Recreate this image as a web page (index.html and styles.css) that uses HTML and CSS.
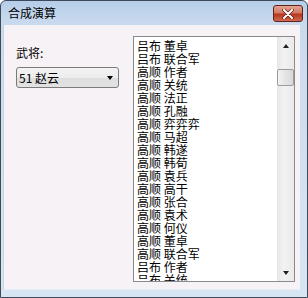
FILE: index.html
```html
<!DOCTYPE html>
<html lang="zh-CN">
<head>
  <meta charset="UTF-8">
  <title>合成演算</title>
  <link rel="stylesheet" href="styles.css">
</head>
<body>
  <div class="window">
    <div class="titlebar">
      <span class="title">合成演算</span>
      <span class="close">
        <svg width="12" height="10" viewBox="0 0 12 10">
          <path d="M2 1 L10 9 M10 1 L2 9" stroke="#5a1a12" stroke-width="3.4" stroke-linecap="round"/>
          <path d="M2 1 L10 9 M10 1 L2 9" stroke="#fff" stroke-width="2" stroke-linecap="round"/>
        </svg>
      </span>
    </div>
    <div class="client">
      <div class="side">
        <div class="label">武将:</div>
        <div class="combo">
          <span>51 赵云</span>
          <span class="combo-arrow"></span>
        </div>
      </div>
      <div class="listbox">
        <ul class="items">
          <li>吕布 董卓</li>
          <li>吕布 联合军</li>
          <li>高顺 作者</li>
          <li>高顺 关统</li>
          <li>高顺 法正</li>
          <li>高顺 孔融</li>
          <li>高顺 弈弈弈</li>
          <li>高顺 马超</li>
          <li>高顺 韩遂</li>
          <li>高顺 韩荀</li>
          <li>高顺 袁兵</li>
          <li>高顺 高干</li>
          <li>高顺 张合</li>
          <li>高顺 袁术</li>
          <li>高顺 何仪</li>
          <li>高顺 董卓</li>
          <li>高顺 联合军</li>
          <li>吕布 作者</li>
          <li>吕布 关统</li>
        </ul>
        <div class="scrollbar">
          <div class="sb-btn"><span class="arrow-up"></span></div>
          <div class="sb-track">
            <div class="sb-thumb"></div>
          </div>
          <div class="sb-btn"><span class="arrow-down"></span></div>
        </div>
      </div>
    </div>
  </div>
</body>
</html>
```

FILE: styles.css
```css
body {
  margin: 0;
  padding: 0;
  font-family: "Noto Sans CJK SC", "Liberation Sans", sans-serif;
  font-size: 12px;
  color: #000;
  background-color: #ffffff;
}

.window {
  width: 308px;
  height: 298px;
  box-sizing: border-box;
  border: 1px solid #3e4a5a;
  border-radius: 6px 6px 0 0;
  padding: 0 7px 7px 2px;
  background: linear-gradient(to bottom, #b6cee8 0px, #cbdbee 24px, #d8e5f3 100%);
  display: flex;
  flex-direction: column;
}

.titlebar {
  height: 24px;
  display: flex;
  align-items: flex-start;
  justify-content: space-between;
  padding-left: 5px;
}

.title {
  margin-top: 4px;
  line-height: 16px;
  font-size: 12px;
}

.close {
  width: 30px;
  height: 17px;
  box-sizing: border-box;
  margin-top: 4px;
  margin-right: -3px;
  border: 1px solid #5e231b;
  border-radius: 3px;
  background: linear-gradient(to bottom, #e4a394 0%, #d27a63 45%, #b8361f 55%, #cf6a4f 100%);
  display: flex;
  align-items: center;
  justify-content: center;
}

.client {
  flex: 1;
  display: flex;
  padding: 11px 0 0 12px;
  background-color: #f7f2f5;
  border-left: 1px solid #c9d3dc;
  border-bottom: 1px solid #e6edf3;
}

.side {
  width: 103px;
  margin-right: 14px;
}

.label {
  margin-top: 9px;
  line-height: 16px;
}

.combo {
  margin-top: 6px;
  height: 21px;
  box-sizing: border-box;
  border: 1px solid #7b7b7b;
  border-radius: 3px;
  background: linear-gradient(to bottom, #f4f4f4 0%, #ececec 50%, #dedede 51%, #e2e2e2 100%);
  display: flex;
  align-items: center;
  justify-content: space-between;
  padding: 0 5px 0 2px;
  line-height: 19px;
}

.combo-arrow {
  width: 0;
  height: 0;
  border-left: 3.5px solid transparent;
  border-right: 3.5px solid transparent;
  border-top: 4px solid #000;
}

.listbox {
  width: 162px;
  height: 246px;
  box-sizing: border-box;
  border: 1px solid #8a8a8a;
  background-color: #fff;
  display: flex;
}

.items {
  flex: 1;
  list-style: none;
  margin: 0;
  padding: 2px 0 0 3px;
  overflow: hidden;
}

.items li {
  height: 13px;
  line-height: 13px;
  white-space: nowrap;
}

.scrollbar {
  width: 17px;
  display: flex;
  flex-direction: column;
  background: linear-gradient(to right, #e6e6e6, #f2f2f2 40%, #eaeaea);
}

.sb-btn {
  height: 17px;
  display: flex;
  align-items: center;
  justify-content: center;
}

.arrow-up {
  width: 0;
  height: 0;
  border-left: 3.5px solid transparent;
  border-right: 3.5px solid transparent;
  border-bottom: 4px solid #222;
}

.arrow-down {
  width: 0;
  height: 0;
  border-left: 3.5px solid transparent;
  border-right: 3.5px solid transparent;
  border-top: 4px solid #222;
}

.sb-track {
  flex: 1;
}

.sb-thumb {
  margin-top: 15px;
  height: 17px;
  box-sizing: border-box;
  border: 1px solid #9b9b9b;
  border-radius: 2px;
  background: linear-gradient(to right, #f3f3f3, #e4e4e4 50%, #d8d8d8);
}
```
